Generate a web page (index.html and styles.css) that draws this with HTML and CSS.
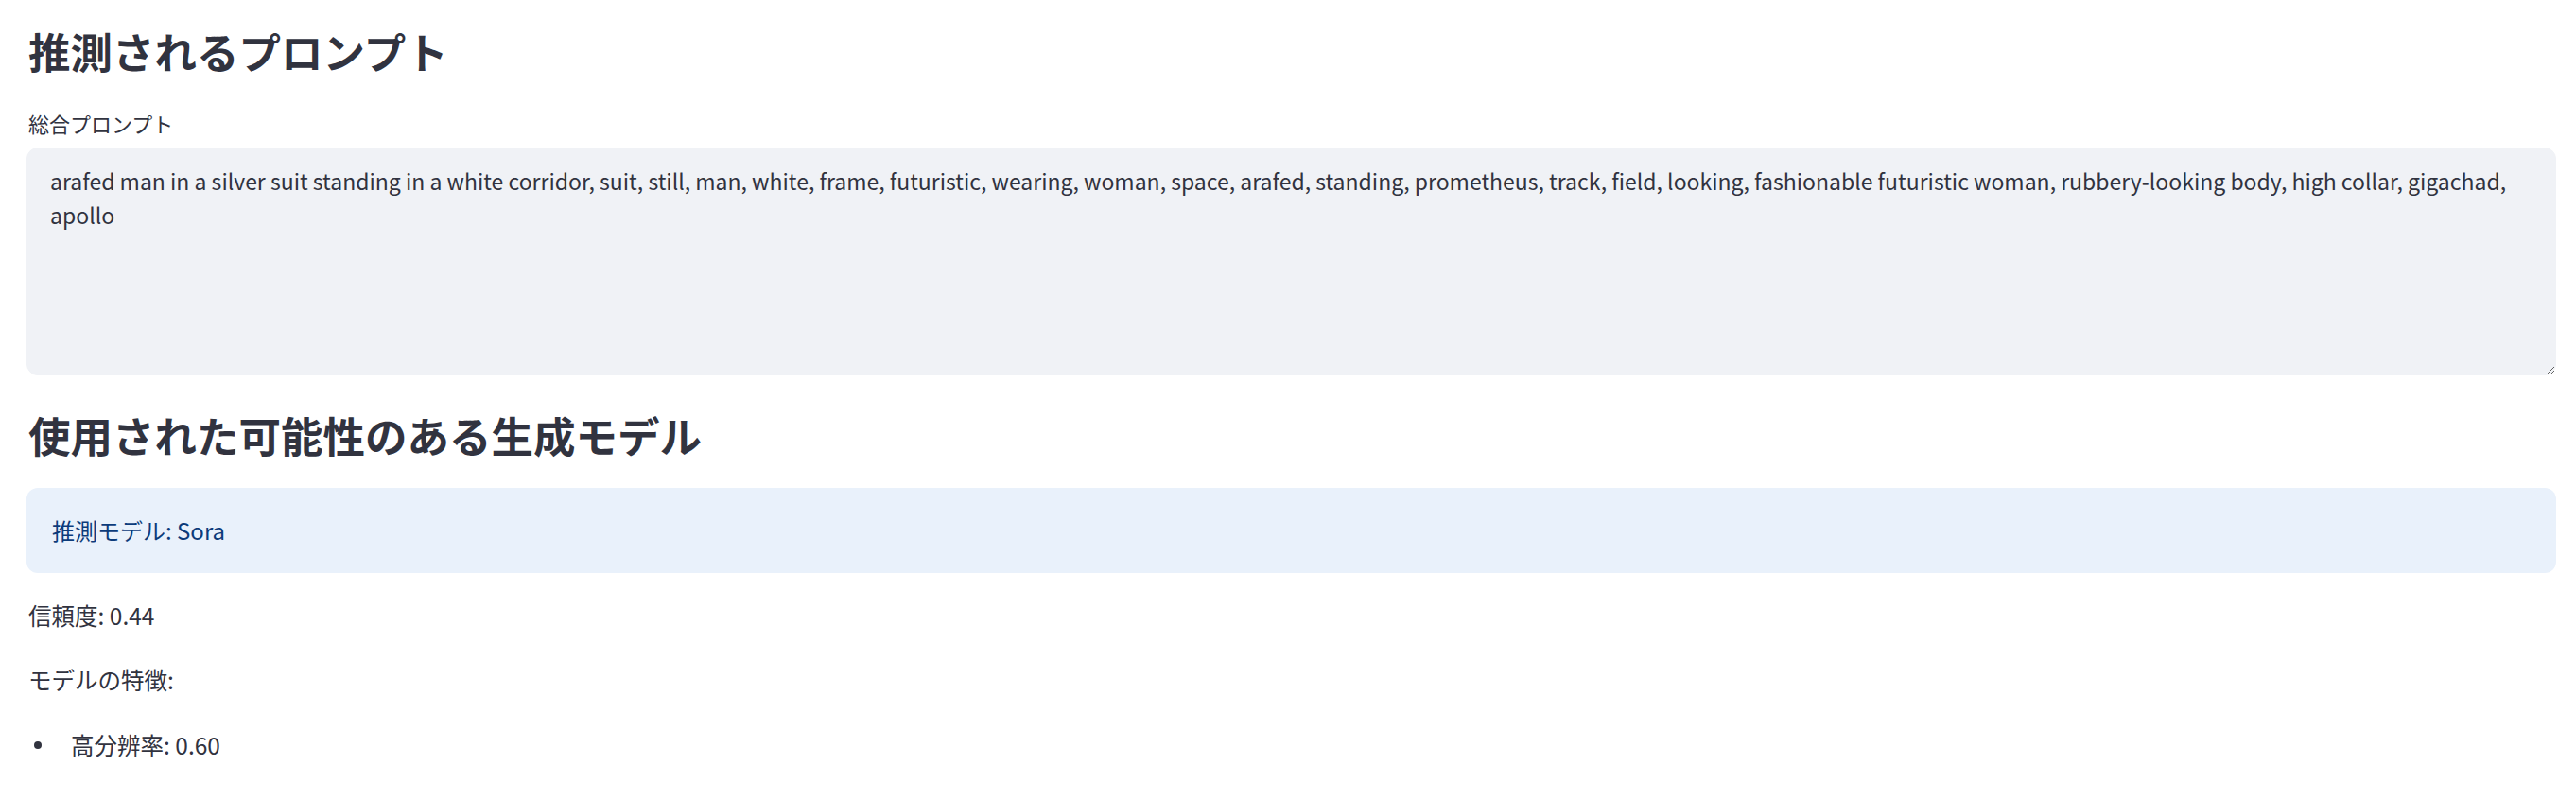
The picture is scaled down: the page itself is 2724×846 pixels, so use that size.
FILE: index.html
```html
<!DOCTYPE html>
<html lang="ja">
<head>
<meta charset="utf-8">
<title>推測されるプロンプト</title>
<link rel="stylesheet" href="styles.css">
</head>
<body>
<main class="main">
  <h3 class="heading first">推測されるプロンプト</h3>
  <label class="label" for="prompt">総合プロンプト</label>
  <textarea id="prompt" class="prompt" readonly>arafed man in a silver suit standing in a white corridor, suit, still, man, white, frame, futuristic, wearing, woman, space, arafed, standing, prometheus, track, field, looking, fashionable futuristic woman, rubbery-looking body, high collar, gigachad, apollo</textarea>
  <h3 class="heading second">使用された可能性のある生成モデル</h3>
  <div class="info">推測モデル: Sora</div>
  <p class="text conf">信頼度: 0.44</p>
  <p class="text feat">モデルの特徴:</p>
  <ul class="list">
    <li class="item">高分辨率: 0.60</li>
  </ul>
</main>
</body>
</html>
```
FILE: styles.css
```css
html, body {
  margin: 0;
  padding: 0;
  background: #ffffff;
}

body {
  font-family: "Noto Sans CJK JP", "Noto Sans", sans-serif;
  color: #31333f;
}

.main {
  display: flex;
  flex-direction: column;
  padding: 24px 21px 0 28px;
}

.heading {
  margin: 0;
  font-size: 44.5px;
  line-height: 60px;
  font-weight: 700;
  color: #31333f;
  padding-left: 2px;
}

.label {
  margin-top: 31px;
  font-size: 22px;
  line-height: 30px;
  padding-left: 2px;
}

.prompt {
  margin-top: 11px;
  box-sizing: border-box;
  width: 100%;
  height: 241px;
  padding: 16px 24px;
  border: 1px solid #f0f2f6;
  border-radius: 12px;
  background: #f0f2f6;
  color: #31333f;
  font-family: "Noto Sans CJK JP", sans-serif;
  font-size: 23px;
  line-height: 36px;
  resize: vertical;
  outline: none;
  overflow: hidden;
}

.heading.second {
  margin-top: 33px;
}

.info {
  margin-top: 26px;
  padding: 27px 27px;
  border-radius: 12px;
  background: #e9f1fb;
  color: #0c3b7a;
  font-size: 24px;
  line-height: 36px;
}

.text {
  margin: 0;
  font-size: 24.5px;
  line-height: 38px;
  padding-left: 2px;
}

.conf {
  margin-top: 26px;
}

.feat {
  margin-top: 30px;
}

.list {
  margin: 31px 0 0 0;
  padding: 0;
  list-style: none;
}

.item {
  display: flex;
  align-items: center;
  gap: 31px;
  font-size: 24.5px;
  line-height: 38px;
}

.item::before {
  content: "";
  width: 8px;
  height: 8px;
  margin-left: 8px;
  border-radius: 50%;
  background: #31333f;
  flex: none;
}
```
